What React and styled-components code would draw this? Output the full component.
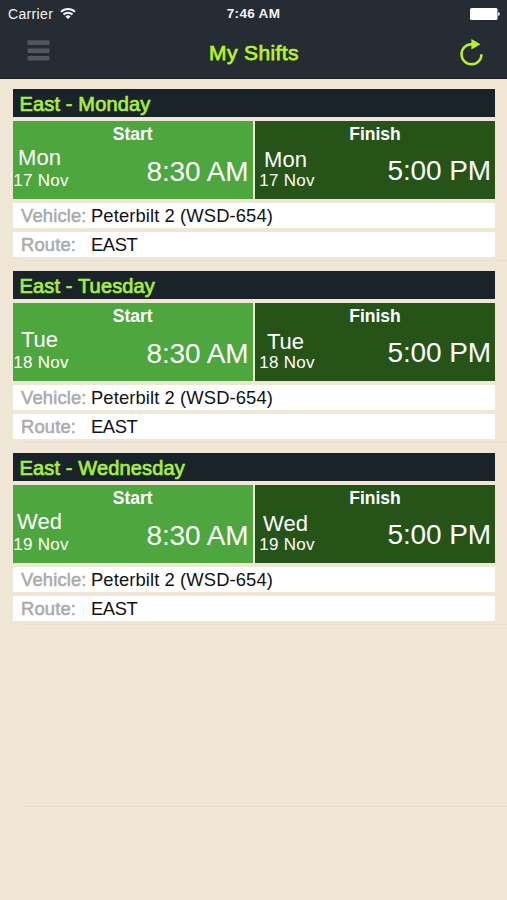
import React from 'react';
import styled, { createGlobalStyle } from 'styled-components';

const GlobalStyle = createGlobalStyle`
  * {
    box-sizing: border-box;
  }

  body {
    margin: 0;
    background: #efe6d6;
    font-family: 'Liberation Sans', Arial, sans-serif;
  }
`;

const Screen = styled.div`
  display: flex;
  flex-direction: column;
  width: 100%;
  min-height: 900px;
  overflow: hidden;
  background: #efe6d6;
`;

const Header = styled.header`
  height: 79px;
  background: #252c33;
  border-bottom: 1px solid #1a2024;
`;

const StatusBar = styled.div`
  display: grid;
  grid-template-columns: 1fr auto 1fr;
  align-items: center;
  height: 28px;
  padding: 0 8px;
  color: #f2f5f7;
  font-size: 14px;
  line-height: 28px;
`;

const Carrier = styled.div`
  display: flex;
  align-items: center;
  gap: 7px;
  letter-spacing: 0.35px;
`;

const Clock = styled.div`
  font-size: 13.5px;
  font-weight: 700;
  letter-spacing: 0.3px;
`;

const BatteryIcon = styled.svg`
  justify-self: end;
  margin-right: -1px;
`;

const NavBar = styled.div`
  display: grid;
  grid-template-columns: 1fr auto 1fr;
  align-items: center;
  height: 50px;
  padding: 0 22px 0 27px;
`;

const NavButton = styled.button`
  display: flex;
  justify-self: ${(props) => props.$side};
  padding: 0;
  border: 0;
  background: none;
  cursor: pointer;
`;

const Title = styled.h1`
  margin: 0 4px 0 0;
  color: #b9f12f;
  font-size: 21px;
  font-weight: 400;
  letter-spacing: 0.4px;
  line-height: 48px;
  -webkit-text-stroke: 0.75px #b9f12f;
`;

const ShiftRow = styled.article`
  display: flex;
  flex-direction: column;
  height: 182px;
  padding: 10px 12px 0 13px;
  background: linear-gradient(#e8dfd0, #e8dfd0) 24px 100% / 100% 1px no-repeat;
`;

const ShiftName = styled.h2`
  height: 28px;
  margin: 0 0 4px;
  padding-left: 6.5px;
  background: #1b232a;
  color: #a5ee45;
  font-size: 20px;
  font-weight: 400;
  letter-spacing: 0.15px;
  line-height: 30px;
  -webkit-text-stroke: 0.7px #a5ee45;
`;

const Times = styled.div`
  display: grid;
  grid-template-columns: 239.5px 1fr;
  gap: 2.5px;
  height: 78px;
  margin-bottom: 4px;
`;

const TimeCard = styled.section`
  padding-top: 3px;
  background: ${(props) => props.$color};
  color: #ffffff;
`;

const TimeLabel = styled.h3`
  margin: 0;
  font-size: 17.5px;
  font-weight: 700;
  line-height: 20px;
  text-align: center;
`;

const TimeBody = styled.div`
  display: flex;
  justify-content: space-between;
  padding-right: 4px;
`;

const DateBlock = styled.div`
  display: flex;
  flex-direction: column;
  align-items: center;
  width: 56px;
  padding-top: ${(props) => (props.$lowered ? 4 : 2)}px;
  margin-left: ${(props) => (props.$lowered ? 4 : 0)}px;
`;

const Day = styled.div`
  margin-left: -3px;
  font-size: 22px;
  line-height: 24px;
`;

const DayDate = styled.div`
  margin-top: ${(props) => (props.$lowered ? -1 : 1)}px;
  font-size: 17px;
  letter-spacing: 0.3px;
  line-height: 20px;
  white-space: nowrap;
`;

const Time = styled.div`
  padding-top: ${(props) => (props.$lowered ? 11 : 12)}px;
  font-size: 28px;
  letter-spacing: -0.1px;
  line-height: 32px;
`;

const Details = styled.dl`
  display: flex;
  flex-direction: column;
  gap: 4px;
  margin: 0;
`;

const Detail = styled.div`
  display: grid;
  grid-template-columns: 70px 1fr;
  height: 25px;
  padding-left: 8px;
  background: #ffffff;
  font-size: 18.4px;
  line-height: 26px;
`;

const DetailLabel = styled.dt`
  color: #aaaaab;
  letter-spacing: 0.15px;
  -webkit-text-stroke: 0.5px #aaaaab;
`;

const DetailValue = styled.dd`
  margin: 0;
  color: #111111;
  letter-spacing: ${(props) => (props.$tight ? -0.4 : 0.1)}px;
`;

const EmptyRow = styled.div`
  height: 182px;
  margin-left: 24px;
  border-bottom: 1px solid #e8dfd0;
`;

const shifts = [
  { name: 'East - Monday', day: 'Mon', date: '17 Nov', start: '8:30 AM', finish: '5:00 PM', vehicle: 'Peterbilt 2 (WSD-654)', route: 'EAST' },
  { name: 'East - Tuesday', day: 'Tue', date: '18 Nov', start: '8:30 AM', finish: '5:00 PM', vehicle: 'Peterbilt 2 (WSD-654)', route: 'EAST' },
  { name: 'East - Wednesday', day: 'Wed', date: '19 Nov', start: '8:30 AM', finish: '5:00 PM', vehicle: 'Peterbilt 2 (WSD-654)', route: 'EAST' },
];

const WifiIcon = () => (
  <svg width="16" height="14" viewBox="0 0 16 14" fill="none" stroke="#f2f5f7" strokeWidth="2">
    <path d="M1 4.8C4.9 0.9 11.1 0.9 15 4.8" />
    <path d="M3.5 7.5C6 5.1 10 5.1 12.5 7.5" />
    <path d="M8 12L5.4 9.4C6.9 8 9.1 8 10.6 9.4Z" fill="#f2f5f7" stroke="none" />
  </svg>
);

const MenuIcon = () => (
  <svg width="23" height="26" viewBox="0 0 23 26" fill="#50575e">
    <rect x="0.5" y="0.3" width="22" height="4.6" rx="1" />
    <rect x="0.5" y="8.4" width="22" height="4.6" rx="1" />
    <rect x="0.5" y="16" width="22" height="4.6" rx="1" />
  </svg>
);

const RefreshIcon = () => (
  <svg width="26" height="28" viewBox="0 0 26 28">
    <path d="M14 5.2H12.4A10 10 0 1 0 22.5 15.2" fill="none" stroke="#b9f12f" strokeWidth="2.5" />
    <path d="M12.4 0L21.5 5.3L12.4 10.6Z" fill="#b9f12f" />
  </svg>
);

const TimePanel = ({ label, color, day, date, time, lowered }) => (
  <TimeCard $color={color}>
    <TimeLabel>{label}</TimeLabel>
    <TimeBody>
      <DateBlock $lowered={lowered}>
        <Day>{day}</Day>
        <DayDate $lowered={lowered}>{date}</DayDate>
      </DateBlock>
      <Time $lowered={lowered}>{time}</Time>
    </TimeBody>
  </TimeCard>
);

const Shift = ({ shift }) => (
  <ShiftRow>
    <ShiftName>{shift.name}</ShiftName>
    <Times>
      <TimePanel label="Start" color="#4ea63e" day={shift.day} date={shift.date} time={shift.start} />
      <TimePanel label="Finish" color="#255318" day={shift.day} date={shift.date} time={shift.finish} lowered />
    </Times>
    <Details>
      <Detail>
        <DetailLabel>Vehicle:</DetailLabel>
        <DetailValue>{shift.vehicle}</DetailValue>
      </Detail>
      <Detail>
        <DetailLabel>Route:</DetailLabel>
        <DetailValue $tight>{shift.route}</DetailValue>
      </Detail>
    </Details>
  </ShiftRow>
);

const App = () => (
  <>
    <GlobalStyle />
    <Screen>
      <Header>
        <StatusBar>
          <Carrier>
            Carrier
            <WifiIcon />
          </Carrier>
          <Clock>7:46 AM</Clock>
          <BatteryIcon width="30" height="13" viewBox="0 0 30 13" fill="#ffffff">
            <rect x="0" y="0" width="27.5" height="12" rx="1.5" />
            <path d="M28.2 4C30.3 4.5 30.3 7.5 28.2 8Z" />
          </BatteryIcon>
        </StatusBar>
        <NavBar>
          <NavButton $side="start" aria-label="Menu">
            <MenuIcon />
          </NavButton>
          <Title>My Shifts</Title>
          <NavButton $side="end" aria-label="Refresh">
            <RefreshIcon />
          </NavButton>
        </NavBar>
      </Header>
      {shifts.map((shift) => (
        <Shift key={shift.name} shift={shift} />
      ))}
      <EmptyRow />
    </Screen>
  </>
);

export default App;
